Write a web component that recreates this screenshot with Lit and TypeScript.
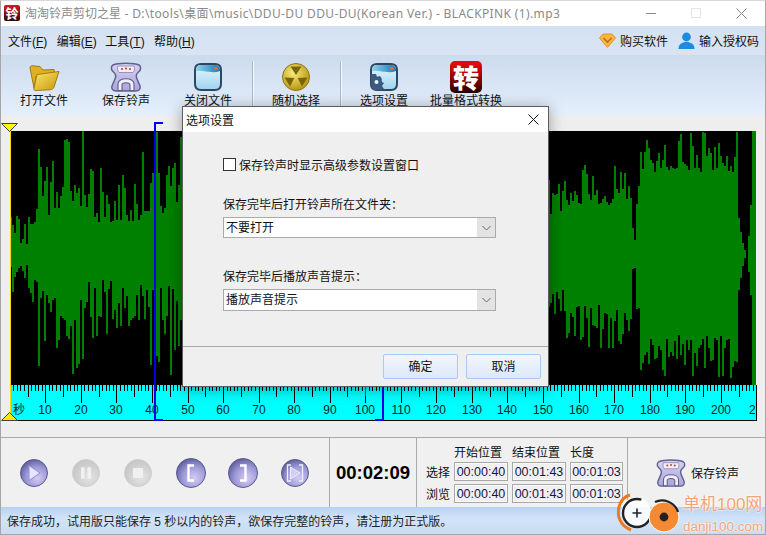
import { LitElement, html, css, svg } from 'lit';
import { customElement } from 'lit/decorators.js';

// [end x, body top, spike top, body bottom, spike bottom]
const WAVE_SECTIONS: number[][] = [
  [12, 240, 199, 262, 314],
  [28, 245, 215, 262, 300],
  [38, 225, 200, 276, 310],
  [50, 215, 135, 290, 370],
  [88, 208, 131, 298, 385],
  [140, 222, 165, 280, 340],
  [182, 215, 131, 285, 385],
  [549, 215, 131, 285, 385],
  [564, 215, 180, 290, 330],
  [632, 205, 165, 305, 350],
  [636, 240, 225, 268, 280],
  [640, 205, 175, 300, 340],
  [738, 172, 131, 335, 383],
];

function wavePath(): string {
  let seed = 20211;
  const rnd = () => {
    seed = (seed * 1103515245 + 12345) & 0x7fffffff;
    return seed / 0x7fffffff;
  };
  let d = '';
  let x = 10;
  for (const [end, bodyTop, spikeTop, bodyBot, spikeBot] of WAVE_SECTIONS) {
    while (x < end) {
      const top = bodyTop - Math.pow(rnd(), 1.7) * (bodyTop - spikeTop);
      const bot = bodyBot + Math.pow(rnd(), 1.7) * (spikeBot - bodyBot);
      d += `M${x - 10} ${Math.round(top - 131)}h2V${Math.round(bot - 131)}h-2z`;
      x += 2;
    }
  }
  // fade out at the end of the track
  const tail: number[][] = [
    [738, 2, 218, 290],
    [740, 2, 232, 278],
    [742, 2, 243, 266],
    [744, 2, 250, 258],
    [748, 2, 236, 272],
    [750, 2, 205, 295],
    [752, 4, 131, 385],
  ];
  for (const [tx, w, top, bot] of tail) {
    d += `M${tx - 10} ${top - 131}h${w}V${bot - 131}h-${w}z`;
  }
  return d;
}

const floppy = (size: number) => svg`
  <svg width=${size} height=${size} viewBox="0 0 32 32">
    <defs>
      <linearGradient id="fl${size}" x1="0" y1="0" x2="0" y2="1">
        <stop offset="0" stop-color="#d8d4f2" />
        <stop offset="1" stop-color="#aaa4da" />
      </linearGradient>
    </defs>
    <path d="M3 4C8 1.5 24 1.5 29 4C31.500 5.500 31 9 28.500 11C26 13 25.500 15 27 18L30 25C31 28 29 30 26 30H6C3 30 1 28 2 25L5 18C6.500 15 6 13 3.500 11C1 9 .5 5.500 3 4Z"
      fill="url(#fl${size})" stroke="#62608e" stroke-width="1.5" />
    <path d="M8 5H24C25 7 24.500 10 23 11.500H9C7.500 10 7 7 8 5Z" fill="#f0eefa" stroke="#8482ae" stroke-width=".8" />
    <circle cx="12" cy="8" r="1.100" fill="#c8402c" /><circle cx="16" cy="7.500" r="1.100" fill="#c8402c" /><circle cx="20" cy="8" r="1.100" fill="#c8402c" />
    <path d="M8 29.500V23C8 16 24 16 24 23V29.500H20V24C20 21 12 21 12 24V29.500Z" fill="#f0eefa" stroke="#5e5c8a" stroke-width="1.100" />
  </svg>`;

const windowIcon = (gear: boolean) => svg`
  <svg width="32" height="32" viewBox="0 0 32 32">
    <defs>
      <linearGradient id="wg${gear ? 1 : 0}" x1="0" y1="0" x2="0" y2="1">
        <stop offset="0" stop-color="#eaf7fd" /><stop offset="1" stop-color="#9fd3ef" />
      </linearGradient>
      <linearGradient id="wb${gear ? 1 : 0}" x1="0" y1="0" x2="1" y2="0">
        <stop offset="0" stop-color="#8fd0ec" /><stop offset="1" stop-color="#1c78b8" />
      </linearGradient>
    </defs>
    <path d="M3 9C3 5 5 3 9 3H23C27 3 29 5 29 9V23C29 27 27 29 23 29H9C5 29 3 27 3 23Z" fill="url(#wg${gear ? 1 : 0})" stroke="#2c4860" stroke-width="2" />
    <path d="M4 10V9C4 6 6 4 9 4H23C26 4 28 6 28 9V10C20 13 12 9 4 10Z" fill="url(#wb${gear ? 1 : 0})" />
    <circle cx="24" cy="7.500" r="1.700" fill="#e8702c" />
    ${gear
      ? svg`<path d="M3 13H8L9 16L12 15L14 18L12 20L16 22L14 25L16 28L13 29H9C5 29 3 27 3 23Z" fill="#3c5a80" />
            <circle cx="8.500" cy="21" r="5.500" fill="#3c5a80" />
            <circle cx="8.500" cy="21" r="2" fill="#e8f4fa" />`
      : ''}
  </svg>`;

const mediaGlyphs: Record<string, unknown> = {
  play: svg`<path d="M11 8.500L22 16L11 23.500Z" fill="#e6e6ff" stroke="#8f8fd0" stroke-width="1" />`,
  pause: svg`<rect x="11" y="10" width="3.600" height="12" rx="1.600" fill="#f0f0f0" /><rect x="17.400" y="10" width="3.600" height="12" rx="1.600" fill="#f0f0f0" />`,
  stop: svg`<rect x="11" y="11" width="10" height="10" rx="1" fill="#f0f0f0" />`,
  in: svg`<path d="M19 8.500H13.500V23.500H19" fill="none" stroke="#fff" stroke-width="2.400" />`,
  out: svg`<path d="M13 8.500H18.500V23.500H13" fill="none" stroke="#fff" stroke-width="2.400" />`,
  range: svg`<path d="M12 8H8.500V24H12M20 8H23.500V24H20" fill="none" stroke="#eef" stroke-width="1.300" /><path d="M11.500 10L21 16L11.500 22Z" fill="#cfcff4" stroke="#eef" stroke-width="1" />`,
};

@customElement('app-root')
export class AppRoot extends LitElement {
  static styles = css`
    :host {
      display: block;
      width: 766px;
      height: 535px;
      font-family: 'Liberation Sans', 'Noto Sans CJK SC', sans-serif;
      font-size: 12px;
      color: #111;
    }
    .frame {
      position: relative;
      width: 766px;
      height: 535px;
      display: flex;
      flex-direction: column;
      overflow: hidden;
      background: #f0f0f0;
    }
    .frame::after {
      content: '';
      position: absolute;
      inset: 0;
      border: 1px solid #a6a6a6;
      border-top-color: #d8d8d8;
      pointer-events: none;
    }

    .titlebar {
      height: 26px;
      flex: none;
      display: flex;
      align-items: center;
      padding-left: 4px;
      background: #fff;
      color: #8a8a8a;
      font-family: 'Noto Sans', 'Noto Sans CJK SC', sans-serif;
      white-space: nowrap;
    }
    .app-icon {
      width: 16px;
      height: 16px;
      margin-right: 5px;
      background: linear-gradient(#d0201c, #300808);
      border-radius: 2px;
      color: #fff;
      font-size: 13px;
      font-weight: bold;
      line-height: 16px;
      text-align: center;
      font-family: 'Noto Sans CJK SC', sans-serif;
    }
    .title-text {
      flex: 1;
      letter-spacing: 0.37px;
    }
    .title-text b {
      font-weight: normal;
      letter-spacing: 0;
    }
    .winbtns {
      display: flex;
      align-items: center;
      gap: 35px;
      margin-right: 19px;
    }
    .winbtns svg {
      display: block;
    }

    .menubar {
      height: 29px;
      flex: none;
      display: flex;
      align-items: center;
      padding: 0 7px 0 8px;
      background: linear-gradient(#d4e1f1, #d9e5f3);
    }
    .menu {
      margin-right: 9.67px;
      width: 39px;
      white-space: nowrap;
    }
    .menu u {
      text-underline-offset: 1px;
    }
    .spacer {
      flex: 1;
    }
    .account {
      display: flex;
      align-items: center;
      gap: 4px;
      margin-left: 10px;
    }

    .toolbar {
      height: 60px;
      flex: none;
      display: flex;
      padding: 6px 0 0 3px;
      box-sizing: border-box;
      background: linear-gradient(#ccdbed, #e5effc);
    }
    .tool {
      width: 82px;
      display: flex;
      flex-direction: column;
      align-items: center;
    }
    .tool-icon {
      height: 32px;
    }
    .tool-icon svg {
      display: block;
    }
    .tool-label {
      line-height: 16px;
      white-space: nowrap;
    }
    .tool-sep {
      width: 1px;
      height: 46px;
      margin: 0 1px 0 3px;
      background: #a9b7c8;
      border-right: 1px solid #f4f8fc;
    }
    .convert {
      width: 32px;
      height: 32px;
      border-radius: 5px;
      background: linear-gradient(#e40808 10%, #8c0404 55%, #200000);
      color: #fff;
      font-family: 'Noto Sans CJK SC', sans-serif;
      font-size: 26px;
      font-weight: 900;
      line-height: 32px;
      text-align: center;
    }

    .stage {
      position: relative;
      flex: 1;
      padding: 16px 0 0 10px;
      background: #eeeeee;
      border-bottom: 1px solid #a9a9a9;
    }
    .stage svg {
      display: block;
    }
    .ruler-text {
      font-size: 12px;
      fill: #001a30;
      font-family: 'Liberation Sans', 'Noto Sans CJK SC', sans-serif;
    }
    .marker {
      position: absolute;
      width: 2px;
      height: 299px;
      top: 7px;
      background: #0000ee;
    }
    .marker::before,
    .marker::after {
      content: '';
      position: absolute;
      width: 9px;
      height: 2px;
      background: #0000ee;
    }
    .marker::before {
      top: 0;
    }
    .marker::after {
      bottom: 0;
    }
    .marker.start {
      left: 154px;
    }
    .marker.end {
      left: 382px;
    }
    .marker.end::before,
    .marker.end::after {
      right: 0;
    }
    .cursor-line {
      position: absolute;
      left: 10px;
      top: 16px;
      width: 1px;
      height: 282px;
      background: #f4e000;
    }
    .tri {
      position: absolute;
      left: 1px;
    }
    .tri.top {
      top: 8px;
    }
    .tri.bottom {
      top: 297px;
    }

    .controls {
      height: 69px;
      flex: none;
      display: flex;
    }
    .transport {
      width: 330px;
      box-sizing: border-box;
      display: flex;
      align-items: center;
      gap: 20.2px;
      padding-left: 18px;
      border-right: 1px solid #a9a9a9;
    }
    .transport svg {
      display: block;
    }
    .clock {
      width: 87px;
      box-sizing: border-box;
      display: flex;
      align-items: center;
      justify-content: center;
      border-right: 1px solid #a9a9a9;
      font-size: 18.5px;
      font-weight: bold;
      color: #000;
    }
    .positions {
      display: grid;
      grid-template-columns: 24px 54px 54px 53px;
      grid-template-rows: 16px 19px 19px;
      column-gap: 4px;
      row-gap: 3px;
      width: 211px;
      box-sizing: border-box;
      padding: 5px 0 0 9px;
      border-right: 1px solid #a9a9a9;
      align-items: center;
    }
    .positions span {
      white-space: nowrap;
    }
    .field {
      box-sizing: border-box;
      height: 19px;
      border: 1px solid #a8a8a8;
      box-shadow: inset 0 0 0 1px #fafafa;
      font-size: 12.5px;
      line-height: 18px;
      text-align: center;
      color: #161650;
    }
    .save {
      display: flex;
      align-items: center;
      gap: 5px;
      padding-left: 28px;
    }
    .save svg {
      display: block;
    }

    .status {
      height: 28px;
      flex: none;
      display: flex;
      align-items: center;
      padding: 0 0 2px 7px;
      box-sizing: border-box;
      color: #222;
      background: linear-gradient(#b6d2f2, #d2e3f8 40%, #c9dcf3);
      white-space: pre;
    }

    .dialog {
      position: absolute;
      left: 182px;
      top: 106px;
      width: 367px;
      height: 281px;
      box-sizing: border-box;
      display: flex;
      flex-direction: column;
      background: #efefef;
      border: 1px solid #5c5c5c;
      box-shadow: 0 2px 14px rgba(0, 0, 0, 0.35);
    }
    .dlg-title {
      height: 25px;
      flex: none;
      display: flex;
      align-items: center;
      justify-content: space-between;
      padding: 0 9px 0 3px;
      background: #fff;
      color: #111;
    }
    .dlg-title svg {
      display: block;
    }
    .dlg-body {
      flex: 1;
      padding: 26px 52px 0 40px;
      display: flex;
      flex-direction: column;
    }
    .check-row {
      display: flex;
      align-items: center;
      gap: 3px;
      height: 13px;
    }
    .check {
      width: 13px;
      height: 13px;
      box-sizing: border-box;
      border: 1px solid #333;
      background: #fff;
    }
    .dlg-label {
      line-height: 14px;
      margin-top: 27px;
      margin-bottom: 5px;
    }
    .dlg-label.second {
      margin-top: 32px;
    }
    .combo {
      height: 21px;
      box-sizing: border-box;
      display: flex;
      border: 1px solid #aaaaaa;
      background: #fff;
      align-items: stretch;
    }
    .combo.tall {
      height: 22px;
    }
    .combo-text {
      flex: 1;
      padding-left: 2px;
      line-height: 20px;
    }
    .combo-arrow {
      width: 18px;
      background: #e3e3e3;
      display: flex;
      align-items: center;
      justify-content: center;
    }
    .dlg-footer {
      height: 40px;
      flex: none;
      box-sizing: border-box;
      display: flex;
      justify-content: flex-end;
      gap: 8px;
      padding: 7px 7px 0 0;
      border-top: 1px solid #a9a9a9;
    }
    .btn {
      width: 75px;
      height: 25px;
      box-sizing: border-box;
      border: 1px solid #a9c9f0;
      border-radius: 2px;
      background: linear-gradient(#f3f6fc, #dce8f9);
      text-align: center;
      line-height: 24px;
      color: #111;
    }

    .watermark {
      position: absolute;
      left: 617px;
      top: 492px;
      display: flex;
      color: #f4a474;
      pointer-events: none;
    }
    .watermark svg {
      display: block;
    }
    .wm-text {
      margin-left: 2px;
      display: flex;
      flex-direction: column;
      text-shadow: 0 0 2px #fff, 0 0 2px #fff;
    }
    .wm-name {
      font-size: 17px;
      line-height: 25px;
      white-space: nowrap;
    }
    .wm-url {
      font-size: 13.5px;
      line-height: 16px;
      margin-top: 2px;
    }
  `;

  private renderTool(label: string, icon: unknown) {
    return html`<div class="tool">
      <div class="tool-icon">${icon}</div>
      <div class="tool-label">${label}</div>
    </div>`;
  }

  private renderMedia(glyph: string, r: number, disabled = false) {
    const id = disabled ? 'mediaOff' : 'mediaOn';
    return html`<svg width="32" height="32" viewBox="0 0 32 32">
      <defs>
        <radialGradient id="mediaOn" cx=".62" cy=".68" r=".75">
          <stop offset="0" stop-color="#d6ccf0" />
          <stop offset=".55" stop-color="#9c98d8" />
          <stop offset="1" stop-color="#55558f" />
        </radialGradient>
        <radialGradient id="mediaOff" cx=".6" cy=".65" r=".75">
          <stop offset="0" stop-color="#e4e4e4" />
          <stop offset="1" stop-color="#c0c0c0" />
        </radialGradient>
      </defs>
      ${svg`<circle cx="16" cy="16" r=${r} fill="url(#${id})" stroke=${disabled ? '#cfcfcf' : '#5a5a90'} stroke-width="1" />`}
      ${mediaGlyphs[glyph]}
    </svg>`;
  }

  private renderRuler() {
    const ticks = [];
    for (let u = 0; u <= 209; u++) {
      const x = Math.round(3.555 * u - 0.25);
      const len = u % 10 === 0 ? 18 : u % 5 === 0 ? 12 : 6;
      ticks.push(svg`<rect x=${x} y="0" width="1" height=${len} fill="#000" />`);
      if (u % 10 === 0 && u > 0) {
        ticks.push(svg`<text class="ruler-text" x=${x} y="29" text-anchor="middle">${u}</text>`);
      }
    }
    return html`<svg width="747" height="36" viewBox="0 0 747 36" shape-rendering="crispEdges">
      <rect width="747" height="36" fill="#00ffff" />
      ${ticks}
      <rect x="355" y="2" width="1" height="9" fill="#ff0000" />
      <text class="ruler-text" x="3" y="29">秒</text>
      <text class="ruler-text" x="739" y="29">2</text>
      <rect x="0" y="35" width="747" height="1" fill="#000" />
      <rect x="746" y="0" width="1" height="36" fill="#000" />
    </svg>`;
  }

  render() {
    return html`<div class="frame">
      <div class="titlebar">
        <div class="app-icon">铃</div>
        <div class="title-text"><b>淘淘铃声剪切之星</b> - D:\\tools\\桌面\\music\\DDU-DU DDU-DU(Korean Ver.) - BLACKPINK (1).mp3</div>
        <div class="winbtns">
          <svg width="10" height="10" viewBox="0 0 10 10"><path d="M0 5.500H10" stroke="#8a8a8a" /></svg>
          <svg width="10" height="10" viewBox="0 0 10 10"><rect x=".5" y=".5" width="9" height="9" fill="none" stroke="#e4e4e4" /></svg>
          <svg width="11" height="11" viewBox="0 0 11 11"><path d="M.5 .5L10.500 10.500M10.500 .5L.5 10.500" stroke="#8a8a8a" /></svg>
        </div>
      </div>

      <div class="menubar">
        <div class="menu">文件(<u>F</u>)</div>
        <div class="menu">编辑(<u>E</u>)</div>
        <div class="menu">工具(<u>T</u>)</div>
        <div class="menu">帮助(<u>H</u>)</div>
        <div class="spacer"></div>
        <div class="account">
          <svg width="17" height="15" viewBox="0 0 17 15">
            <path d="M4 1H13L16.500 5L8.500 14.500L.5 5Z" fill="#f6b93a" stroke="#e89030" />
            <path d="M4.500 5L8.500 9L12.500 5" fill="none" stroke="#c8642a" stroke-width="1.600" />
          </svg>
          购买软件
        </div>
        <div class="account">
          <svg width="17" height="17" viewBox="0 0 17 17">
            <circle cx="8.500" cy="5" r="4.400" fill="#1c8ce0" />
            <path d="M.5 17C.5 12 4 10 8.500 10S16.500 12 16.500 17Z" fill="#1c8ce0" />
          </svg>
          输入授权码
        </div>
      </div>

      <div class="toolbar">
        ${this.renderTool(
          '打开文件',
          svg`<svg width="32" height="32" viewBox="0 0 32 32">
            <defs><linearGradient id="fold" x1="0" y1="0" x2="1" y2="1"><stop offset="0" stop-color="#fde86a" /><stop offset="1" stop-color="#c8960c" /></linearGradient></defs>
            <path d="M2 7C2 5 4 4 6 5L12 5.500L15 9L26 8.500L27 13L8 15L6 27Z" fill="#e0b020" stroke="#a07c10" />
            <path d="M9 13.500L31 10.500L26 26C25.500 28 24 28.500 22 28.800L8 29.500C6 29.500 5.500 28.500 6 27Z" fill="url(#fold)" stroke="#a07c10" />
          </svg>`
        )}
        ${this.renderTool('保存铃声', floppy(32))}
        ${this.renderTool('关闭文件', windowIcon(false))}
        <div class="tool-sep"></div>
        ${this.renderTool(
          '随机选择',
          svg`<svg width="32" height="32" viewBox="0 0 32 32">
            <defs><radialGradient id="gold" cx=".4" cy=".35" r=".7"><stop offset="0" stop-color="#fbe878" /><stop offset="1" stop-color="#b09210" /></radialGradient></defs>
            <circle cx="16" cy="16" r="13.500" fill="url(#gold)" stroke="#8c7410" />
            <path d="M16 14L10.500 5.500H21.500ZM17.700 17L27.500 16.500L22 25.500ZM14.300 17L10 25.500L4.500 16.500Z" fill="#7a6408" />
          </svg>`
        )}
        <div class="tool-sep"></div>
        ${this.renderTool('选项设置', windowIcon(true))}
        ${this.renderTool('批量格式转换', html`<div class="convert">转</div>`)}
      </div>

      <div class="stage">
        <svg width="746" height="254" viewBox="0 0 746 254" shape-rendering="crispEdges">
          <rect width="746" height="254" fill="#000" />
          <path d=${wavePath()} fill="#008000" />
        </svg>
        ${this.renderRuler()}
        <div class="cursor-line"></div>
        <div class="marker start"></div>
        <div class="marker end"></div>
        <svg class="tri top" width="17" height="9" viewBox="0 0 17 9"><path d="M.5 .5H16.500L8.500 8.500Z" fill="#ffff00" stroke="#444" /></svg>
        <svg class="tri bottom" width="17" height="9" viewBox="0 0 17 9"><path d="M.5 8.500H16.500L8.500 .5Z" fill="#ffe800" stroke="#444" /></svg>
      </div>

      <div class="controls">
        <div class="transport">
          ${this.renderMedia('play', 13.5)}
          ${this.renderMedia('pause', 13.5, true)}
          ${this.renderMedia('stop', 13.5, true)}
          ${this.renderMedia('in', 14.5)}
          ${this.renderMedia('out', 14.5)}
          ${this.renderMedia('range', 13.5)}
        </div>
        <div class="clock">00:02:09</div>
        <div class="positions">
          <span></span><span>开始位置</span><span>结束位置</span><span>长度</span>
          <span>选择</span><div class="field">00:00:40</div><div class="field">00:01:43</div><div class="field">00:01:03</div>
          <span>浏览</span><div class="field">00:00:40</div><div class="field">00:01:43</div><div class="field">00:01:03</div>
        </div>
        <div class="save">${floppy(30)}保存铃声</div>
      </div>

      <div class="status">保存成功，试用版只能保存 5 秒以内的铃声，欲保存完整的铃声，请注册为正式版。</div>

      <div class="dialog">
        <div class="dlg-title">
          选项设置
          <svg width="11" height="11" viewBox="0 0 11 11"><path d="M.5 .5L10.500 10.500M10.500 .5L.5 10.500" stroke="#111" /></svg>
        </div>
        <div class="dlg-body">
          <div class="check-row"><div class="check"></div>保存铃声时显示高级参数设置窗口</div>
          <div class="dlg-label">保存完毕后打开铃声所在文件夹：</div>
          <div class="combo">
            <div class="combo-text">不要打开</div>
            <div class="combo-arrow"><svg width="9" height="6" viewBox="0 0 9 6"><path d="M.5 1L4.500 5L8.500 1" fill="none" stroke="#666" /></svg></div>
          </div>
          <div class="dlg-label second">保存完毕后播放声音提示：</div>
          <div class="combo tall">
            <div class="combo-text">播放声音提示</div>
            <div class="combo-arrow"><svg width="9" height="6" viewBox="0 0 9 6"><path d="M.5 1L4.500 5L8.500 1" fill="none" stroke="#666" /></svg></div>
          </div>
        </div>
        <div class="dlg-footer">
          <div class="btn">确定</div>
          <div class="btn">取消</div>
        </div>
      </div>

      <div class="watermark">
        <svg width="64" height="43" viewBox="0 0 64 43">
          <circle cx="19" cy="20" r="15" fill="#fff" opacity=".85" />
          <path d="M13 3C2 6 -1 20 3 28C5 33 9 36 14 38" fill="none" stroke="#f07818" stroke-width="3" />
          <circle cx="20" cy="21" r="14" fill="none" stroke="#222" stroke-width="2.400" stroke-dasharray="70 18" />
          <path d="M15.500 21H24.500M20 16.500V25.500" stroke="#222" stroke-width="1.600" />
          <circle cx="47" cy="25" r="15" fill="#f58a34" stroke="#fff" stroke-width="1" />
          <circle cx="47" cy="25" r="4.400" fill="#222" />
          <path d="M38 10C46 6 58 10 61 20" fill="none" stroke="#222" stroke-width="2.200" />
        </svg>
        <div class="wm-text">
          <div class="wm-name">单机100网</div>
          <div class="wm-url">danji100.com</div>
        </div>
      </div>
    </div>`;
  }
}

declare global {
  interface HTMLElementTagNameMap {
    'app-root': AppRoot;
  }
}
